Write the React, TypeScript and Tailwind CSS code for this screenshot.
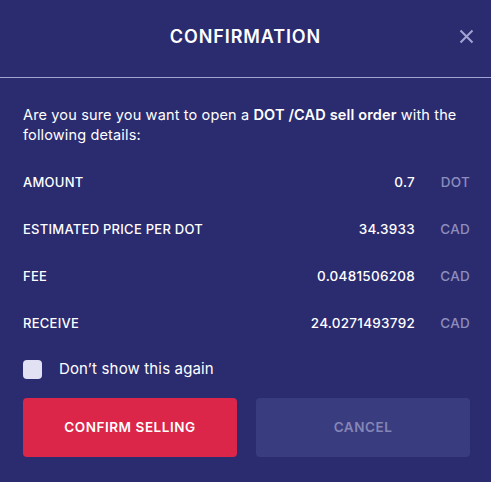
import { useState } from "react";

const rows = [
  { label: "AMOUNT", value: "0.7", unit: "DOT" },
  { label: "ESTIMATED PRICE PER DOT", value: "34.3933", unit: "CAD" },
  { label: "FEE", value: "0.0481506208", unit: "CAD" },
  { label: "RECEIVE", value: "24.0271493792", unit: "CAD" },
];

const App = () => {
  const [checked, setChecked] = useState(false);

  return (
    <div className="w-[491px] h-[482px] bg-[#2b2b70] text-white font-['Inter',sans-serif]">
      <div className="relative h-[78px] flex items-center justify-center border-b border-[#a3a3d4]">
        <h2 className="text-[18px] font-semibold tracking-[0.05em] mt-[-4px]">CONFIRMATION</h2>
        <button className="absolute right-[17px] top-[29px] text-[#a3a3d4]">
          <svg width="15" height="15" viewBox="0 0 15 15" fill="none" stroke="currentColor" strokeWidth="2">
            <path d="M1.5 1.5 L13.5 13.5 M13.5 1.5 L1.5 13.5" />
          </svg>
        </button>
      </div>

      <div className="pl-[23px] pr-[21px] pt-[27px]">
        <p className="text-[14.5px] leading-[20px] tracking-[0.01em]">
          Are you sure you want to open a <span className="font-semibold">DOT /CAD sell order</span> with the
          following details:
        </p>

        <div className="mt-[14px] flex flex-col">
          {rows.map((row) => (
            <div key={row.label} className="h-[47px] flex items-center text-[13px] font-medium tracking-[0.02em]">
              <span className="flex-1">{row.label}</span>
              <span className="text-right text-[13.5px]">{row.value}</span>
              <span className="w-[55px] text-right text-[#8d8ebd] text-[13.5px]">{row.unit}</span>
            </div>
          ))}
        </div>

        <label className="mt-[11px] flex items-center gap-[17px] cursor-pointer">
          <input
            type="checkbox"
            checked={checked}
            onChange={(e) => setChecked(e.target.checked)}
            className="appearance-none w-[19px] h-[19px] rounded-[4px] bg-[#e1e1f3]"
          />
          <span className="text-[15px] tracking-[0.01em]">Don’t show this again</span>
        </label>

        <div className="mt-[17px] flex gap-[19px]">
          <button className="flex-1 h-[59px] rounded-[4px] bg-[#db2649] text-[13.5px] font-semibold tracking-[0.04em]">
            CONFIRM SELLING
          </button>
          <button className="flex-1 h-[59px] rounded-[4px] bg-[#3a3c80] text-[13.5px] font-semibold tracking-[0.04em] text-[#8586b6]">
            CANCEL
          </button>
        </div>
      </div>
    </div>
  );
};

export default App;
